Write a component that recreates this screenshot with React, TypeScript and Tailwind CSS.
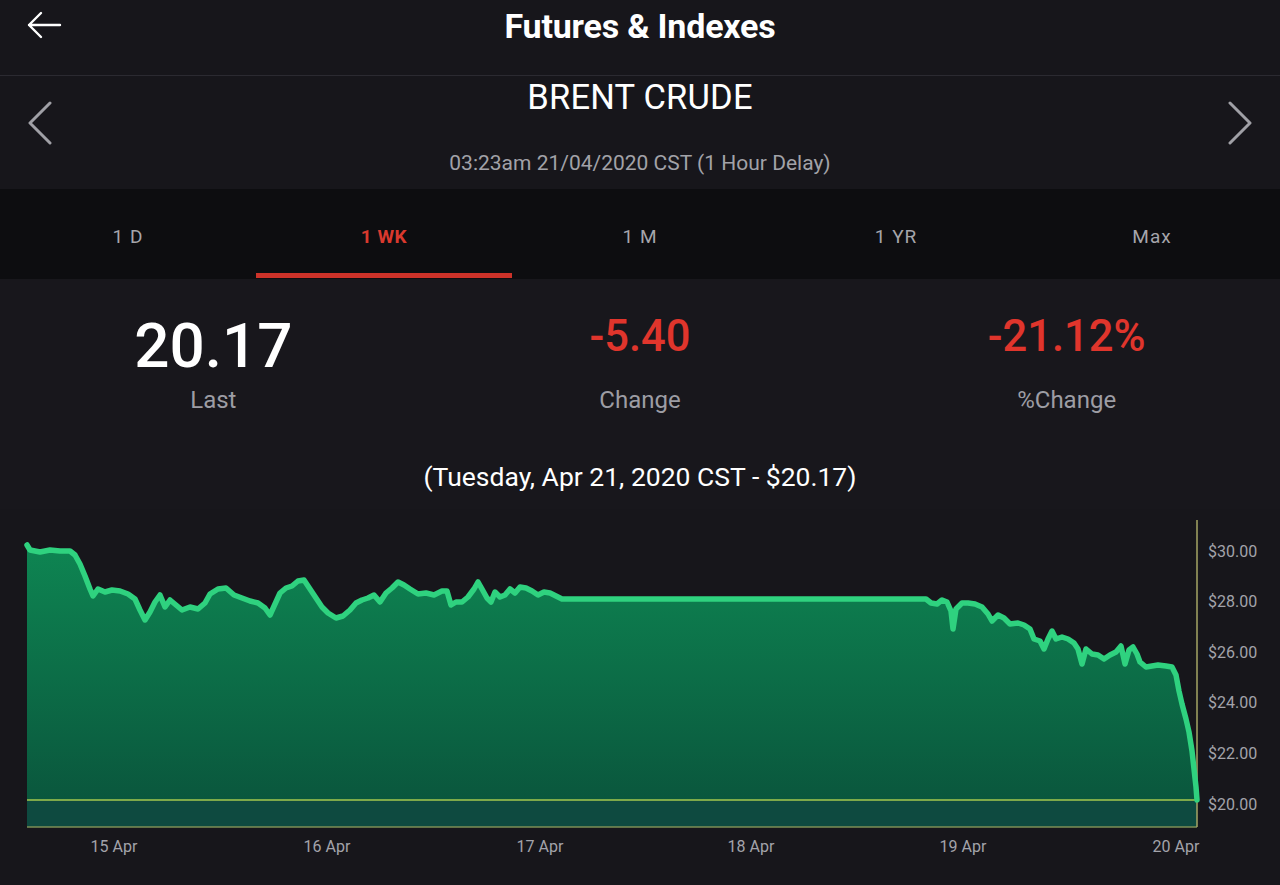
import React from 'react';

// price line traced from the 1 WK chart (page coordinates)
const points: [number, number][] = [
  [27, 546], [30, 551], [40, 553], [50, 551], [60, 552], [70, 552], [75, 556], [80, 565], [85, 577],
  [90, 590], [93, 597], [98, 590], [105, 593], [112, 591], [120, 592], [128, 595], [135, 600],
  [140, 611], [145, 621], [150, 613], [155, 603], [160, 596], [165, 608], [170, 601], [176, 606],
  [182, 611], [190, 608], [198, 610], [205, 604], [210, 595], [218, 590], [226, 589], [234, 596],
  [242, 599], [250, 602], [258, 604], [265, 609], [270, 616], [275, 605], [280, 594], [286, 589],
  [292, 587], [298, 582], [304, 581], [310, 590], [316, 599], [322, 608], [328, 614], [336, 619],
  [343, 617], [350, 611], [356, 604], [362, 601], [368, 599], [374, 596], [380, 603], [386, 594],
  [392, 589], [398, 583], [404, 586], [410, 590], [418, 595], [426, 594], [434, 596], [442, 592],
  [447, 592], [451, 606], [456, 603], [462, 603], [468, 598], [474, 590], [478, 583], [482, 590],
  [487, 599], [491, 603], [495, 593], [500, 598], [505, 596], [510, 590], [515, 594], [520, 588],
  [526, 589], [532, 592], [538, 596], [544, 593], [550, 594], [556, 597], [562, 600], [926, 600],
  [931, 604], [937, 605], [942, 601], [947, 603], [951, 612], [953, 630], [956, 610], [962, 604],
  [968, 604], [975, 605], [982, 608], [988, 615], [992, 622], [998, 616], [1004, 619], [1010, 625],
  [1018, 624], [1024, 626], [1030, 630], [1034, 640], [1040, 642], [1044, 650], [1048, 640],
  [1052, 632], [1056, 640], [1062, 638], [1068, 640], [1074, 644], [1078, 650], [1082, 665],
  [1086, 650], [1092, 655], [1098, 656], [1104, 660], [1110, 656], [1116, 653], [1121, 647],
  [1125, 665], [1129, 651], [1133, 648], [1137, 655], [1140, 663], [1146, 668], [1152, 667],
  [1158, 666], [1166, 667], [1172, 668], [1176, 676], [1179, 692], [1182, 705], [1186, 720],
  [1189, 733], [1192, 752], [1194, 770], [1196, 788], [1197, 801],
];

const linePath = points.map(([x, y], i) => `${i === 0 ? 'M' : 'L'}${x} ${y}`).join(' ');
const areaPath = `${linePath} L1197 828 L27 828 Z`;

const yLabels = [
  { label: '$30.00', y: 552 },
  { label: '$28.00', y: 602 },
  { label: '$26.00', y: 653 },
  { label: '$24.00', y: 703 },
  { label: '$22.00', y: 754 },
  { label: '$20.00', y: 805 },
];

const xLabels = [
  { label: '15 Apr', x: 114 },
  { label: '16 Apr', x: 327 },
  { label: '17 Apr', x: 540 },
  { label: '18 Apr', x: 751 },
  { label: '19 Apr', x: 963 },
  { label: '20 Apr', x: 1176 },
];

const tabs = ['1 D', '1 WK', '1 M', '1 YR', 'Max'];

function PriceChart() {
  return (
    <svg className="block w-[1280px] h-[375px]" viewBox="0 510 1280 375">
      <defs>
        <linearGradient id="areaFill" x1="0" y1="546" x2="0" y2="801" gradientUnits="userSpaceOnUse">
          <stop offset="0" stopColor="#0e8552" />
          <stop offset="1" stopColor="#0a573d" />
        </linearGradient>
      </defs>
      <path d={areaPath} fill="url(#areaFill)" />
      <rect x="27" y="801" width="1170" height="27" fill="#0e4a40" />
      <line x1="27" y1="801" x2="1197" y2="801" stroke="#a4c84e" strokeWidth="1.5" />
      <line x1="27" y1="828" x2="1197" y2="828" stroke="#7c8f56" strokeWidth="1.5" />
      <line x1="1197" y1="521" x2="1197" y2="828" stroke="#a6a666" strokeWidth="1.5" />
      <path d={linePath} fill="none" stroke="#2fd27f" strokeWidth="5.5" strokeLinejoin="round" strokeLinecap="round" />
      {yLabels.map((l) => (
        <text key={l.label} x="1208" y={l.y + 6} fill="#a3a3aa" fontSize="16" fontFamily="Roboto, sans-serif">
          {l.label}
        </text>
      ))}
      {xLabels.map((l) => (
        <text key={l.label} x={l.x} y={853} fill="#a3a3aa" fontSize="16" textAnchor="middle" fontFamily="Roboto, sans-serif">
          {l.label}
        </text>
      ))}
    </svg>
  );
}

export default function App() {
  const active = '1 WK';

  return (
    <div className="w-[1280px] h-[885px] overflow-hidden bg-[#17161b] font-['Roboto',sans-serif] text-white">
      {/* top bar */}
      <div className="h-[76px] grid grid-cols-[1fr_auto_1fr] items-center border-b border-[#2b2a31]">
        <div className="pl-[26px] flex items-center">
          <svg width="36" height="28" viewBox="0 0 36 28" className="-mt-[26px]">
            <path d="M34 14H3 M15 2L3 14l12 12" fill="none" stroke="#ffffff" strokeWidth="2.4" strokeLinecap="round" strokeLinejoin="round" />
          </svg>
        </div>
        <h1 className="text-[34px] font-bold leading-none -mt-[24px] tracking-[-0.2px]">Futures &amp; Indexes</h1>
        <div />
      </div>

      {/* instrument */}
      <div className="h-[113px] flex items-start">
        <div className="w-[80px] pl-[27px] pt-[25px]">
          <svg width="26" height="44" viewBox="0 0 26 44">
            <path d="M23 2L3 22l20 20" fill="none" stroke="#a0a0a6" strokeWidth="3" strokeLinecap="round" strokeLinejoin="round" />
          </svg>
        </div>
        <div className="flex-1 flex flex-col items-center">
          <div className="text-[34.5px] leading-none mt-[4px] tracking-[0.2px]">BRENT CRUDE</div>
          <div className="text-[21px] leading-none mt-[38px] text-[#a2a2a8]">03:23am 21/04/2020 CST (1 Hour Delay)</div>
        </div>
        <div className="w-[80px] pr-[27px] pt-[25px] flex justify-end">
          <svg width="26" height="44" viewBox="0 0 26 44">
            <path d="M3 2l20 20L3 42" fill="none" stroke="#a0a0a6" strokeWidth="3" strokeLinecap="round" strokeLinejoin="round" />
          </svg>
        </div>
      </div>

      {/* range tabs */}
      <div className="h-[90px] grid grid-cols-5 bg-[#0d0d10]">
        {tabs.map((t) => (
          <div key={t} className="flex flex-col">
            <div
              className={
                t === active
                  ? 'flex-1 pt-[12px] flex items-center justify-center text-[19px] font-bold text-[#d9392e] tracking-[0.5px]'
                  : 'flex-1 pt-[12px] flex items-center justify-center text-[19px] text-[#a5a5ab] tracking-[1px]'
              }
            >
              {t}
            </div>
            <div className={t === active ? 'h-[5px] mb-[1px] bg-[#cc3229]' : 'h-[5px] mb-[1px]'} />
          </div>
        ))}
      </div>

      {/* stats */}
      <div className="h-[230px] flex flex-col bg-[#18171c]">
        <div className="grid grid-cols-3 pt-[36px]">
          <div className="flex flex-col items-center">
            <div className="text-[62px] leading-none font-medium text-white">20.17</div>
            <div className="text-[24px] leading-[28px] mt-[9px] text-[#9d9da4]">Last</div>
          </div>
          <div className="flex flex-col items-center">
            <div className="text-[43.5px] leading-[48px] mb-[14px] -mt-[2px] pb-[2px] font-medium text-[#e0352c]">-5.40</div>
            <div className="text-[24px] leading-[28px] mt-[9px] text-[#9d9da4]">Change</div>
          </div>
          <div className="flex flex-col items-center">
            <div className="text-[43.5px] leading-[48px] mb-[14px] -mt-[2px] pb-[2px] font-medium text-[#e0352c]">-21.12%</div>
            <div className="text-[24px] leading-[28px] mt-[9px] text-[#9d9da4]">%Change</div>
          </div>
        </div>
        <div className="text-center text-[26.5px] leading-[30px] mt-[48px] text-white">(Tuesday, Apr 21, 2020 CST - $20.17)</div>
      </div>

      <PriceChart />
    </div>
  );
}
